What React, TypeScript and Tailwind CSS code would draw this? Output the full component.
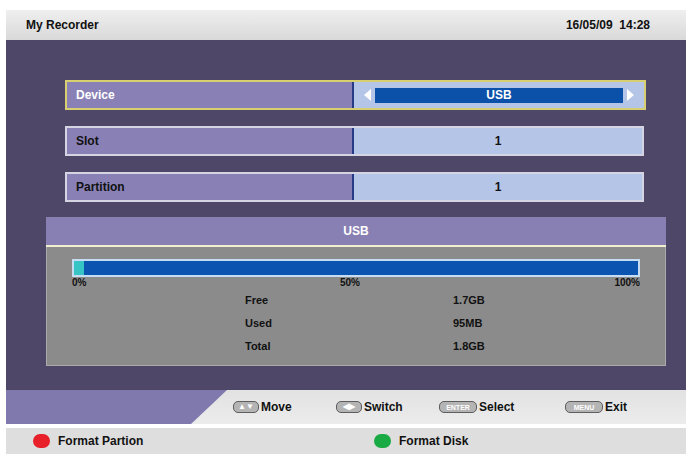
import React from 'react';

type Row = { label: string; value: string; active?: boolean };

const rows: Row[] = [
  { label: 'Device', value: 'USB', active: true },
  { label: 'Slot', value: '1' },
  { label: 'Partition', value: '1' },
];

const usage = [
  { label: 'Free', value: '1.7GB' },
  { label: 'Used', value: '95MB' },
  { label: 'Total', value: '1.8GB' },
];

const font = { fontFamily: '"Liberation Sans", Arial, sans-serif' };

function SettingRow({ row }: { row: Row }) {
  return (
    <div
      className={`flex h-[30px] border-2 ${
        row.active ? 'w-[581px] border-[#d8d070]' : 'w-[579px] border-[#d4d4e2]'
      }`}
    >
      <div
        className={`flex w-[287px] items-center border-r-2 border-[#263a86] bg-[#8981b5] pl-[9px] text-[12px] font-bold ${
          row.active ? 'text-white' : 'text-[#111]'
        }`}
      >
        {row.label}
      </div>
      <div className="flex flex-1 items-center bg-[#b5c5e7] px-[10px]">
        {row.active ? (
          <>
            <span className="h-0 w-0 border-y-[6px] border-r-[7px] border-y-transparent border-r-white" />
            <div className="mx-[4px] flex h-[15px] flex-1 items-center justify-center bg-[#0b51a9] text-[12px] font-bold text-white">
              {row.value}
            </div>
            <span className="h-0 w-0 border-y-[6px] border-l-[7px] border-y-transparent border-l-white" />
          </>
        ) : (
          <div className="flex-1 text-center text-[12px] font-bold text-[#111]">{row.value}</div>
        )}
      </div>
    </div>
  );
}

// small remote-key badge drawn in front of each hint
function Key({ children, wide }: { children: React.ReactNode; wide?: boolean }) {
  return (
    <span
      className={`mr-[2px] flex h-[12px] items-center justify-center gap-[1px] rounded-[5px] border border-[#5e5e5e] bg-[#b4b4b4] font-bold leading-none text-white ${
        wide ? 'w-[38px] text-[7px]' : 'w-[26px] text-[8px]'
      }`}
    >
      {children}
    </span>
  );
}

function Hint({ keyNode, label }: { keyNode: React.ReactNode; label: string }) {
  return (
    <div className="flex items-center text-[12px] font-bold text-[#111]">
      {keyNode}
      <span>{label}</span>
    </div>
  );
}

export default function App() {
  return (
    <div className="flex h-[454px] w-[689px] flex-col bg-white pl-[6px] pr-[3px] pt-[10px]" style={font}>
      {/* title bar */}
      <header className="flex h-[30px] items-center justify-between bg-gradient-to-b from-[#efefef] to-[#d9d9d9] pl-[20px] pr-[36px] text-[12px] font-bold text-[#111]">
        <span>My Recorder</span>
        <span className="whitespace-pre">16/05/09  14:28</span>
      </header>

      {/* main menu area */}
      <main className="flex h-[350px] flex-col bg-[#4e4767] pt-[40px]">
        <div className="ml-[59px] flex flex-col gap-[16px]">
          {rows.map((r) => (
            <SettingRow key={r.label} row={r} />
          ))}
        </div>

        <section className="ml-[40px] mt-[15px] w-[620px]">
          <div className="flex h-[28px] items-center justify-center bg-[#8880b2] text-[12px] font-bold text-white">
            USB
          </div>
          <div className="h-[2px] bg-[#f2eed2]" />
          <div className="h-[119px] border-x border-b border-[#aaaaaa] bg-[#8b8b8b] px-[25px] pt-[12px]">
            <div className="flex h-[18px] border-2 border-[#c6dcf2] bg-[#0b55b0]">
              <div className="w-[10px] bg-[#36c4c4]" />
            </div>
            <div className="grid h-[12px] grid-cols-3 text-[10px] font-bold leading-[12px] text-[#111]">
              <span>0%</span>
              <span className="pr-[12px] text-center">50%</span>
              <span className="text-right">100%</span>
            </div>
            {usage.map((u) => (
              <div key={u.label} className="flex h-[23px] items-center text-[11px] font-bold text-[#111]">
                <span className="ml-[173px] w-[208px]">{u.label}</span>
                <span>{u.value}</span>
              </div>
            ))}
          </div>
        </section>
      </main>

      {/* key hints */}
      <div className="flex h-[34px] bg-gradient-to-b from-[#e2e2e2] to-[#ececec]">
        <div className="w-[221px] bg-[#7f79ad] [clip-path:polygon(0_0,100%_0,calc(100%-36px)_100%,0_100%)]" />
        <div className="ml-[6px] flex items-center">
          <div className="w-[103px]">
            <Hint keyNode={<Key>▲▼</Key>} label="Move" />
          </div>
          <div className="w-[103px]">
            <Hint keyNode={<Key>◀▶</Key>} label="Switch" />
          </div>
          <div className="w-[126px]">
            <Hint keyNode={<Key wide>ENTER</Key>} label="Select" />
          </div>
          <Hint keyNode={<Key wide>MENU</Key>} label="Exit" />
        </div>
      </div>
      <div className="h-[4px] bg-white" />

      {/* colour key actions */}
      <footer className="flex h-[26px] items-center bg-[#dedede] text-[12px] font-bold text-[#111]">
        <span className="ml-[27px] h-[14px] w-[17px] rounded-full bg-[#e8202a]" />
        <span className="ml-[8px] w-[316px]">Format Partion</span>
        <span className="h-[14px] w-[17px] rounded-full bg-[#1aaa44]" />
        <span className="ml-[8px]">Format Disk</span>
      </footer>
    </div>
  );
}
